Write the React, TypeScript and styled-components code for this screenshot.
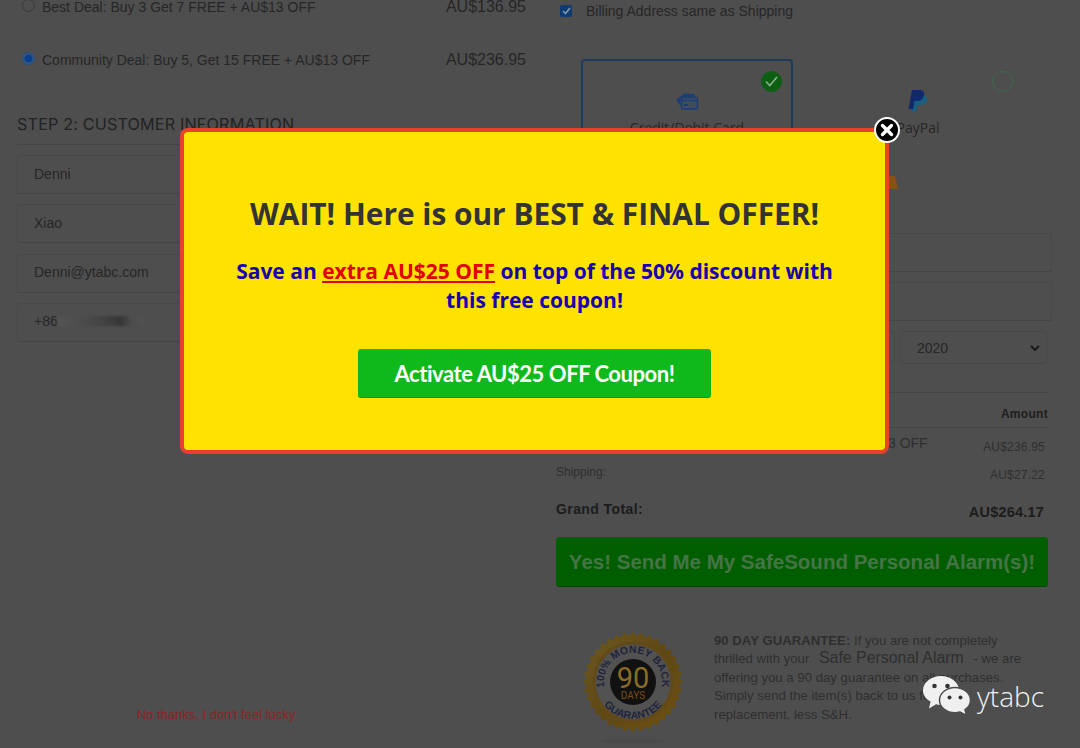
import * as React from 'react';
import styled, { createGlobalStyle } from 'styled-components';

const GlobalStyle = createGlobalStyle`
  html, body {
    margin: 0;
    padding: 0;
    background: #4e4e4e;
    overflow: hidden;
  }
  * {
    box-sizing: border-box;
  }
`;

const Viewport = styled.div`
  position: relative;
  width: 1080px;
  height: 748px;
  overflow: hidden;
  background: #4e4e4e;
  font-family: 'Liberation Sans', Arial, sans-serif;
  color: #222;
`;

const Columns = styled.div`
  display: grid;
  grid-template-columns: 540px 540px;
  height: 100%;
  margin-top: -8px;
`;

const LeftCol = styled.div`
  display: flex;
  flex-direction: column;
  padding: 0 14px 0 17px;
`;

const RightCol = styled.div`
  display: flex;
  flex-direction: column;
  padding: 0 32px 0 16px;
`;

const DealRow = styled.div<{ $gap: number }>`
  display: flex;
  align-items: center;
  justify-content: space-between;
  height: 30px;
  margin-bottom: ${(p) => p.$gap}px;
  padding-left: 5px;
`;

const DealLabel = styled.label`
  display: flex;
  align-items: center;
  font-size: 14px;
  color: #262626;
`;

const Radio = styled.span<{ $on?: boolean }>`
  width: 13px;
  height: 13px;
  margin: -4px 7px 0 0;
  border-radius: 50%;
  border: 1px solid ${(p) => (p.$on ? '#1f4f8c' : '#393939')};
  background: ${(p) => (p.$on ? 'radial-gradient(circle, #0a3f8e 0 3.6px, #35587f 4.4px)' : 'transparent')};
`;

const Price = styled.span`
  font-size: 16px;
  color: #262626;
`;

const StepTitle = styled.h2`
  margin: 39px 0 0;
  padding-bottom: 10px;
  border-bottom: 1px solid #444;
  font-family: Inter, 'Liberation Sans', sans-serif;
  font-size: 16.2px;
  font-weight: 400;
  line-height: 20px;
  letter-spacing: 0.15px;
  color: #222;
`;

const FieldStack = styled.div`
  display: flex;
  flex-direction: column;
  gap: 10.3px;
  margin-top: 10px;
`;

const Field = styled.div`
  display: flex;
  align-items: center;
  height: 39px;
  padding: 0 0 2px 16px;
  border: 1px solid #484848;
  border-bottom-color: #444;
  border-radius: 3px;
  font-size: 14px;
  color: #262626;
`;

const Blurred = styled.span`
  width: 88px;
  height: 10px;
  margin-left: -1px;
  background: linear-gradient(90deg, #555 0%, #4a4a4a 35%, #3f3f3f 60%, #363636 72%, #4d4d4d 85%, #525252 100%);
  filter: blur(1px);
`;

const NoThanks = styled.a`
  width: 398px;
  margin-top: 365px;
  font-size: 13px;
  text-align: center;
  color: #8c2424;
`;

const BillingRow = styled.div`
  display: flex;
  align-items: center;
  gap: 14px;
  height: 16px;
  margin: 11px 0 0 4px;
  font-size: 14px;
  color: #262626;
`;

const Checkbox = styled.span`
  display: flex;
  align-items: center;
  justify-content: center;
  width: 12px;
  height: 12px;
  border-radius: 2px;
  background: #0d3c70;
  color: #7f97b0;
`;

const PayGrid = styled.div`
  display: grid;
  grid-template-columns: 212px 212px;
  grid-template-rows: 88px 78px;
  column-gap: 19px;
  row-gap: 12px;
  margin: 40px 0 0 25px;
`;

const PayCard = styled.div<{ $active?: boolean }>`
  position: relative;
  display: flex;
  flex-direction: column;
  align-items: center;
  padding-top: 31px;
  border: 2px solid ${(p) => (p.$active ? '#1c3c5a' : 'transparent')};
  border-radius: 4px;
`;

const PayIconSlot = styled.span`
  display: flex;
  align-items: center;
  justify-content: center;
  height: 18px;
`;

const PayName = styled.span`
  margin-top: 8px;
  font-family: 'Open Sans', sans-serif;
  font-size: 14px;
  line-height: 20px;
  color: #262626;
`;

const Tick = styled.span<{ $on?: boolean }>`
  position: absolute;
  top: 10px;
  right: 9px;
  display: flex;
  align-items: center;
  justify-content: center;
  width: 21px;
  height: 21px;
  border-radius: 50%;
  border: 1px solid ${(p) => (p.$on ? '#0b5e12' : '#3c6b4c')};
  background: ${(p) => (p.$on ? '#0b5e12' : 'transparent')};
`;

const PeekIcon = styled.span`
  align-self: flex-start;
  margin: -22px 0 0 65px;
`;

const CardFields = styled.div`
  display: flex;
  flex-direction: column;
  gap: 10px;
  margin-top: -4px;
  margin-right: -4px;
`;

const CardField = styled.div`
  height: 39px;
  border: 1px solid #484848;
  border-bottom-color: #444;
  border-radius: 3px;
`;

const ExpiryRow = styled.div`
  display: grid;
  grid-template-columns: 339px 147px;
  gap: 5px;
  margin-top: 10px;
`;

const Select = styled.div`
  display: flex;
  align-items: center;
  justify-content: space-between;
  height: 33px;
  padding: 0 6px 0 16px;
  border: 1px solid #484848;
  border-radius: 3px;
  font-size: 14px;
  color: #262626;
`;

const Rule = styled.div<{ $top: number }>`
  height: 1px;
  margin-top: ${(p) => p.$top}px;
  background: #444;
`;

const AmountHead = styled.div`
  margin-top: 14px;
  text-align: right;
  font-size: 12px;
  font-weight: 700;
  line-height: 14px;
  letter-spacing: 0.3px;
  color: #1e1e1e;
`;

const LineRow = styled.div<{ $top: number }>`
  display: flex;
  align-items: baseline;
  justify-content: space-between;
  margin-top: ${(p) => p.$top}px;
  padding-right: 3px;
  font-size: 12px;
  line-height: 14px;
  letter-spacing: 0.2px;
  color: #2e2e2e;
`;

const ItemNote = styled.span`
  position: relative;
  top: -3px;
  margin-left: 332px;
  font-size: 14px;
  letter-spacing: 0;
`;

const ShippingLabel = styled.span`
  position: relative;
  top: -3px;
  letter-spacing: 0;
`;

const TotalRow = styled.div`
  display: flex;
  align-items: baseline;
  justify-content: space-between;
  margin-top: 19px;
  padding-right: 4px;
  font-size: 14px;
  font-weight: 700;
  line-height: 16px;
  letter-spacing: 0.4px;
  color: #1c1c1c;
`;

const TotalValue = styled.span`
  position: relative;
  top: 3px;
  font-size: 14.5px;
  letter-spacing: 0.2px;
`;

const SubmitBar = styled.div`
  display: flex;
  align-items: center;
  justify-content: center;
  height: 50px;
  margin-top: 20px;
  border-radius: 4px;
  background: #005e00;
  border-bottom: 1px solid #004800;
  font-size: 20.5px;
  font-weight: 700;
  color: #467446;
  white-space: nowrap;
`;

const GuaranteeRow = styled.div`
  display: flex;
  gap: 29px;
  margin-top: 41px;
  padding-left: 25px;
`;

const SealBox = styled.div`
  flex: none;
  width: 104px;
  padding-top: 2px;
`;

const SealShadow = styled.div`
  width: 60px;
  height: 2px;
  margin: 2px auto 0;
  background: #474747;
  filter: blur(1px);
`;

const GuaranteeText = styled.p`
  width: 340px;
  margin: 4px 0 0;
  font-size: 13.2px;
  line-height: 18.4px;
  white-space: nowrap;
  color: #2e2e2e;
`;

const ProductName = styled.span`
  margin: 0 6px 0 6px;
  font-size: 15.9px;
  line-height: 16px;
`;

const Modal = styled.div`
  position: absolute;
  left: 180px;
  top: 128px;
  display: flex;
  flex-direction: column;
  align-items: center;
  width: 709px;
  height: 326px;
  padding: 62px 40px 0;
  border: 4px solid #e8412d;
  border-radius: 8px;
  background: #ffe300;
`;

const ModalTitle = styled.h1`
  margin: 0;
  font-family: 'Open Sans', sans-serif;
  font-size: 29.85px;
  font-weight: 700;
  line-height: 40px;
  color: #333;
  white-space: nowrap;
`;

const ModalText = styled.p`
  margin: 23px 0 0;
  font-family: 'Open Sans', sans-serif;
  font-size: 21px;
  font-weight: 700;
  line-height: 29px;
  text-align: center;
  color: #1800b0;
`;

const Extra = styled.span`
  color: #e00000;
  text-decoration: underline;
`;

const CouponButton = styled.button`
  width: 353px;
  height: 49px;
  margin-top: 34px;
  padding: 0;
  border: none;
  border-bottom: 1px solid #0d9a16;
  border-radius: 3px;
  background: #10b91b;
  font-family: Lato, sans-serif;
  font-size: 22px;
  font-weight: 700;
  letter-spacing: -0.45px;
  color: #fff;
`;

const CloseButton = styled.button`
  position: absolute;
  top: -15px;
  right: -15px;
  display: flex;
  align-items: center;
  justify-content: center;
  width: 26px;
  height: 26px;
  padding: 0;
  border: 2px solid #fff;
  border-radius: 50%;
  background: #000;
`;

const Watermark = styled.div`
  position: absolute;
  left: 922px;
  top: 675px;
  display: flex;
  align-items: center;
  gap: 6px;
  font-family: 'Open Sans', sans-serif;
  font-size: 28px;
  font-weight: 300;
  line-height: 42px;
  color: #f2f2f2;
`;

const starburst = (cx: number, cy: number, outer: number, inner: number, points: number) => {
  const out: string[] = [];
  for (let i = 0; i < points * 2; i++) {
    const r = i % 2 === 0 ? outer : inner;
    const a = (Math.PI * i) / points;
    out.push(`${(cx + r * Math.cos(a)).toFixed(1)},${(cy + r * Math.sin(a)).toFixed(1)}`);
  }
  return out.join(' ');
};

const Seal = () => (
  <svg width="104" height="104" viewBox="0 0 104 104">
    <defs>
      <linearGradient id="gold" x1="0" y1="0" x2="1" y2="1">
        <stop offset="0" stopColor="#6e5820" />
        <stop offset="0.5" stopColor="#5f4814" />
        <stop offset="1" stopColor="#6f5212" />
      </linearGradient>
      <path id="topArc" d="M52 81 A29 29 0 1 1 52.01 81" />
      <path id="bottomArc" d="M52 15 A37 37 0 1 0 52.01 15" />
    </defs>
    <polygon points={starburst(52, 52, 50, 46, 36)} fill="url(#gold)" />
    <circle cx="52" cy="52" r="39" fill="#525252" stroke="#62491a" strokeWidth="3" />
    <circle cx="52" cy="52" r="23" fill="#111" />
    <text fontFamily="'Liberation Sans', sans-serif" fontSize="10.5" fill="#20243a" fontWeight="700">
      <textPath href="#topArc" startOffset="50%" textAnchor="middle">
        100% MONEY BACK
      </textPath>
    </text>
    <text fontFamily="'Liberation Sans', sans-serif" fontSize="10.5" fill="#20243a" fontWeight="700">
      <textPath href="#bottomArc" startOffset="50%" textAnchor="middle">
        GUARANTEE
      </textPath>
    </text>
    <text x="52" y="58" textAnchor="middle" fontFamily="Roboto, sans-serif" fontSize="29" fill="#8a6c26">
      90
    </text>
    <text x="52" y="69" textAnchor="middle" fontFamily="Roboto, sans-serif" fontSize="10" fill="#7a4f14">
      DAYS
    </text>
  </svg>
);

const CardIcon = () => (
  <svg width="24" height="18" viewBox="0 0 24 18">
    <path d="M1 8 L9 1.5 L19 2 L20 5 L8 5 Q5.5 5 5.5 8 L5.5 14 Z" fill="#1c3d78" />
    <rect x="6.5" y="5.5" width="16" height="11.5" rx="1.5" fill="#3f4c60" stroke="#1c3d78" strokeWidth="1.4" />
    <rect x="6.5" y="8" width="16" height="1.2" fill="#1c3d78" />
    <rect x="9" y="12" width="4" height="2" fill="#1c3d78" />
  </svg>
);

const PayPalIcon = () => (
  <svg width="20" height="24" viewBox="0 0 20 24">
    <path d="M7 6 H15 Q20 7 18.5 12 Q17 16 12 16 H9.5 L8.2 22.5 H4 Z" fill="#17607f" />
    <path d="M4 1 H12 Q17 1.5 16 6.5 Q14.5 12 9 12 H6.5 L5 20 H0.5 Z" fill="#12286e" />
  </svg>
);

const AfterIcon = () => (
  <svg width="24" height="20" viewBox="0 0 24 20">
    <rect x="2" y="0" width="5" height="4" rx="2" fill="#26262c" />
    <path d="M0 6 L16 6 L19 19 L0 19 Z" fill="#8a5212" />
  </svg>
);

const WeChatIcon = () => (
  <svg width="49" height="42" viewBox="0 0 49 42">
    <path d="M19 1 C29 1 37 7.5 37 15.5 C37 23.5 29 30 19 30 C17 30 15.5 29.8 14 29.3 L7 33.5 L8.6 26.6 C3.8 24 1 20 1 15.5 C1 7.5 9 1 19 1 Z" fill="#f0f0f0" />
    <circle cx="12.5" cy="11" r="2.3" fill="#333" />
    <circle cx="25.5" cy="11" r="2.3" fill="#333" />
    <path d="M33 12.5 C41.5 12.5 48.5 18.2 48.5 25.2 C48.5 29 46.4 32.4 43 34.7 L44.5 40.5 L38 37 C36.4 37.5 34.7 37.8 33 37.8 C24.5 37.8 17.5 32.2 17.5 25.2 C17.5 18.2 24.5 12.5 33 12.5 Z" fill="#f0f0f0" stroke="#4d4d4d" strokeWidth="1.5" />
    <circle cx="27.5" cy="22.5" r="2" fill="#333" />
    <circle cx="38.5" cy="22.5" r="2" fill="#333" />
  </svg>
);

const Chevron = () => (
  <svg width="10" height="6" viewBox="0 0 10 6">
    <path d="M1 1 L5 5 L9 1" fill="none" stroke="#1a1a1a" strokeWidth="2" />
  </svg>
);

const App: React.FC = () => {
  return (
    <>
      <GlobalStyle />
      <Viewport>
        <Columns>
          <LeftCol>
            <DealRow $gap={23}>
              <DealLabel>
                <Radio />
                Best Deal: Buy 3 Get 7 FREE + AU$13 OFF
              </DealLabel>
              <Price>AU$136.95</Price>
            </DealRow>
            <DealRow $gap={0}>
              <DealLabel>
                <Radio $on />
                Community Deal: Buy 5, Get 15 FREE + AU$13 OFF
              </DealLabel>
              <Price>AU$236.95</Price>
            </DealRow>
            <StepTitle>STEP 2: CUSTOMER INFORMATION</StepTitle>
            <FieldStack>
              <Field>Denni</Field>
              <Field>Xiao</Field>
              <Field>Denni@ytabc.com</Field>
              <Field>
                +86
                <Blurred />
              </Field>
            </FieldStack>
            <NoThanks>No thanks, I don't feel lucky</NoThanks>
          </LeftCol>
          <RightCol>
            <BillingRow>
              <Checkbox>
                <svg width="9" height="8" viewBox="0 0 9 8">
                  <path d="M1 4 L3.5 6.5 L8 1" fill="none" stroke="currentColor" strokeWidth="1.6" />
                </svg>
              </Checkbox>
              Billing Address same as Shipping
            </BillingRow>
            <PayGrid>
              <PayCard $active>
                <Tick $on>
                  <svg width="13" height="11" viewBox="0 0 13 11">
                    <path d="M1 5.5 L4.8 9.5 L12 1" fill="none" stroke="#8fb08f" strokeWidth="1.6" />
                  </svg>
                </Tick>
                <PayIconSlot>
                  <CardIcon />
                </PayIconSlot>
                <PayName>Credit/Debit Card</PayName>
              </PayCard>
              <PayCard>
                <Tick />
                <PayIconSlot>
                  <PayPalIcon />
                </PayIconSlot>
                <PayName>PayPal</PayName>
              </PayCard>
              <PayCard />
              <PayCard>
                <PeekIcon>
                  <AfterIcon />
                </PeekIcon>
              </PayCard>
            </PayGrid>
            <CardFields>
              <CardField />
              <CardField />
            </CardFields>
            <ExpiryRow>
              <Select />
              <Select>
                2020
                <Chevron />
              </Select>
            </ExpiryRow>
            <Rule $top={28} />
            <AmountHead>Amount</AmountHead>
            <Rule $top={6} />
            <LineRow $top={11}>
              <ItemNote>3 OFF</ItemNote>
              <span>AU$236.95</span>
            </LineRow>
            <LineRow $top={14}>
              <ShippingLabel>Shipping:</ShippingLabel>
              <span>AU$27.22</span>
            </LineRow>
            <TotalRow>
              <span>Grand Total:</span>
              <TotalValue>AU$264.17</TotalValue>
            </TotalRow>
            <SubmitBar>Yes! Send Me My SafeSound Personal Alarm(s)!</SubmitBar>
            <GuaranteeRow>
              <SealBox>
                <Seal />
                <SealShadow />
              </SealBox>
              <GuaranteeText>
                <b>90 DAY GUARANTEE:</b> If you are not completely
                <br />
                thrilled with your <ProductName>Safe Personal Alarm</ProductName> - we are
                <br />
                offering you a 90 day guarantee on all purchases.
                <br />
                Simply send the item(s) back to us for a
                <br />
                replacement, less S&amp;H.
              </GuaranteeText>
            </GuaranteeRow>
          </RightCol>
        </Columns>
        <Modal>
          <ModalTitle>WAIT! Here is our BEST &amp; FINAL OFFER!</ModalTitle>
          <ModalText>
            Save an <Extra>extra AU$25 OFF</Extra> on top of the 50% discount with
            <br />
            this free coupon!
          </ModalText>
          <CouponButton>Activate AU$25 OFF Coupon!</CouponButton>
          <CloseButton aria-label="Close">
            <svg width="14" height="14" viewBox="0 0 14 14">
              <path d="M2.5 2.5 L11.5 11.5 M11.5 2.5 L2.5 11.5" stroke="#fff" strokeWidth="3.4" strokeLinecap="round" />
            </svg>
          </CloseButton>
        </Modal>
        <Watermark>
          <WeChatIcon />
          ytabc
        </Watermark>
      </Viewport>
    </>
  );
};

export default App;
